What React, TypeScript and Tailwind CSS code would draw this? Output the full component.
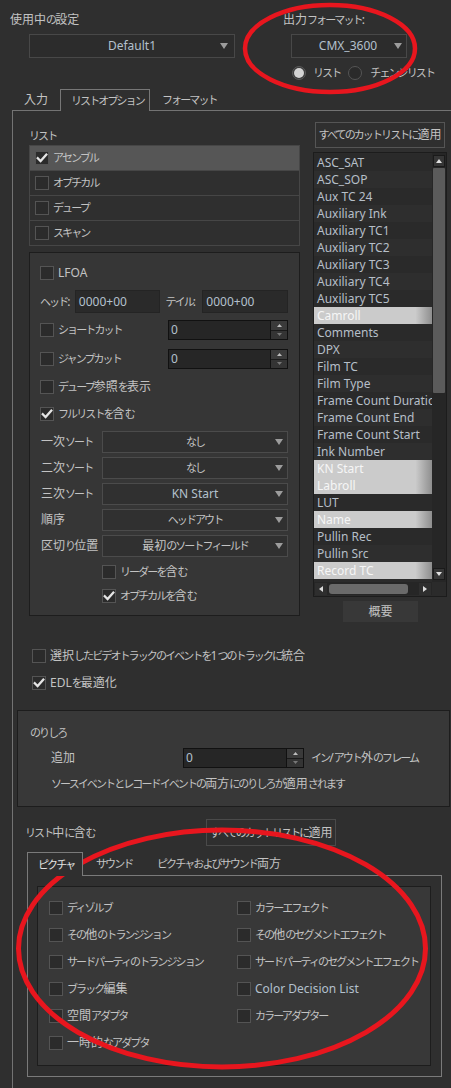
import React from "react";

const LBL = "text-[#c3c3c3]";
const VAL = "text-[#b3c0cd]";

const KANA = /([\u3040-\u30ff]+)/;
function J({ t }: { t: string }) {
  const parts = t.split(KANA);
  return (
    <>
      {parts.map((p, i) =>
        i % 2 === 1 ? (
          <span key={i} className="text-[11px] tracking-[-1.9px]">
            {p}
          </span>
        ) : p ? (
          <span key={i}>{p}</span>
        ) : null
      )}
    </>
  );
}

function Tri({ dir = "down", color = "#9c9c9c", w = 8, h = 6 }: { dir?: "down" | "up" | "left" | "right"; color?: string; w?: number; h?: number }) {
  let d = `M0 0 H${w} L${w / 2} ${h} Z`;
  if (dir === "up") d = `M0 ${h} H${w} L${w / 2} 0 Z`;
  if (dir === "left") d = `M${w} 0 V${h} L0 ${h / 2} Z`;
  if (dir === "right") d = `M0 0 V${h} L${w} ${h / 2} Z`;
  return (
    <svg width={w} height={h} viewBox={`0 0 ${w} ${h}`} className="block">
      <path d={d} fill={color} />
    </svg>
  );
}

function Checkbox({ checked }: { checked?: boolean }) {
  return (
    <span className="flex h-[14px] w-[14px] shrink-0 items-center justify-center border border-[#545454] bg-[#2b2b2b]">
      {checked && (
        <svg width="12" height="12" viewBox="0 0 12 12" className="block">
          <path d="M1.8 6.2 L4.6 9 L10.3 2.6" fill="none" stroke="#e4e4e4" strokeWidth="2.3" strokeLinecap="square" />
        </svg>
      )}
    </span>
  );
}

function CheckRow({ label, checked, className = "", latin }: { label: string; checked?: boolean; className?: string; latin?: boolean }) {
  return (
    <div className={`flex h-[18px] items-center gap-[4px] whitespace-nowrap ${className}`}>
      <Checkbox checked={checked} />
      {latin ? <span className={VAL}>{label}</span> : <span className={LBL}><J t={label} /></span>}
    </div>
  );
}

function Radio({ on }: { on?: boolean }) {
  return on ? (
    <span className="flex h-[14px] w-[14px] shrink-0 items-center justify-center rounded-full border border-[#5a5a5a] bg-[#3a3a3a]">
      <span className="block h-[10px] w-[10px] rounded-full bg-[#d4d4d4]" />
    </span>
  ) : (
    <span className="block h-[14px] w-[14px] shrink-0 rounded-full border border-[#555] bg-[#2a2a2a]" />
  );
}

function Select({ value, className = "", blue }: { value: string; className?: string; blue?: boolean }) {
  return (
    <div className={`flex h-[22px] items-center border border-[#4b4b4b] bg-[#303030] ${className}`}>
      <span className="w-[12px] shrink-0" />
      <span className={`flex-1 truncate text-center ${blue ? VAL : LBL}`}>{blue ? value : <J t={value} />}</span>
      <span className="flex w-[12px] shrink-0 items-center justify-start">
        <Tri />
      </span>
    </div>
  );
}

function Spin({ className = "" }: { className?: string }) {
  return (
    <div className={`flex h-[20px] shrink-0 border border-[#111] bg-[#262626] ${className}`}>
      <div className={`flex flex-1 items-center pl-[2px] ${VAL}`}>0</div>
      <div className="flex w-[17px] flex-col border-l border-[#111]">
        <div className="flex flex-1 items-center justify-center border-b border-[#1a1a1a] bg-[#3a3a3a]">
          <Tri dir="up" w={5} h={3} color="#bdbdbd" />
        </div>
        <div className="flex flex-1 items-center justify-center bg-[#343434]">
          <Tri dir="down" w={5} h={3} color="#777" />
        </div>
      </div>
    </div>
  );
}

const ITEMS: { t: string; s?: boolean }[] = [
  { t: "ASC_SAT" },
  { t: "ASC_SOP" },
  { t: "Aux TC 24" },
  { t: "Auxiliary Ink" },
  { t: "Auxiliary TC1" },
  { t: "Auxiliary TC2" },
  { t: "Auxiliary TC3" },
  { t: "Auxiliary TC4" },
  { t: "Auxiliary TC5" },
  { t: "Camroll", s: true },
  { t: "Comments" },
  { t: "DPX" },
  { t: "Film TC" },
  { t: "Film Type" },
  { t: "Frame Count Duration" },
  { t: "Frame Count End" },
  { t: "Frame Count Start" },
  { t: "Ink Number" },
  { t: "KN Start", s: true },
  { t: "Labroll", s: true },
  { t: "LUT" },
  { t: "Name", s: true },
  { t: "Pullin Rec" },
  { t: "Pullin Src" },
  { t: "Record TC", s: true },
];

const SORTS: { label: string; value: string; blue?: boolean }[] = [
  { label: "一次ソート", value: "なし" },
  { label: "二次ソート", value: "なし" },
  { label: "三次ソート", value: "KN Start", blue: true },
  { label: "順序", value: "ヘッドアウト" },
  { label: "区切り位置", value: "最初のソートフィールド" },
];

const PIC_LEFT = ["ディゾルブ", "その他のトランジション", "サードパーティのトランジション", "ブラック編集", "空間アダプタ", "一時的なアダプタ"];
const PIC_RIGHT = ["カラーエフェクト", "その他のセグメントエフェクト", "サードパーティのセグメントエフェクト", "Color Decision List", "カラーアダプター"];

export default function App() {
  return (
    <div className='relative flex h-[1088px] w-[451px] flex-col overflow-hidden bg-[#2f2f2f] font-["Noto_Sans","Noto_Sans_CJK_JP",sans-serif] text-[12px] leading-[16px] text-[#c3c3c3]'>
      {/* Header */}
      <div className="flex h-[89px] shrink-0 pt-[12px]">
        <div className="w-[283px] pl-[10px]">
          <div className="h-[16px]">
            <J t="使用中の設定" />
          </div>
          <div className="ml-[19px] mt-[6px] flex h-[24px] w-[206px] items-center border border-[#484848] bg-[#2c2c2c]">
            <span className="w-[14px]" />
            <span className={`flex-1 text-center ${VAL}`}>Default1</span>
            <span className="flex w-[14px] items-center justify-start">
              <Tri />
            </span>
          </div>
        </div>
        <div>
          <div className="h-[16px] whitespace-nowrap">
            <J t="出力フォーマット:" />
          </div>
          <div className="ml-[8px] mt-[6px] flex h-[24px] w-[116px] items-center border border-[#484848] bg-[#2c2c2c]">
            <span className="w-[10px]" />
            <span className={`flex-1 text-center ${VAL}`}>CMX_3600</span>
            <span className="flex w-[12px] items-center justify-start">
              <Tri />
            </span>
          </div>
          <div className="ml-[9px] mt-[6px] flex h-[18px] items-center whitespace-nowrap">
            <Radio on />
            <span className="ml-[7px]">
              <J t="リスト" />
            </span>
            <span className="ml-[8px]">
              <Radio />
            </span>
            <span className="ml-[8px]">
              <J t="チェンジリスト" />
            </span>
          </div>
        </div>
      </div>

      {/* Tabs */}
      <div className="ml-[12px] flex h-[21px] shrink-0 items-stretch whitespace-nowrap">
        <div className="flex w-[48px] items-center pl-[12px]">
          <J t="入力" />
        </div>
        <div className="relative z-10 -mb-px flex h-[22px] w-[90px] items-center border-l border-r border-t border-[#777] bg-[#2f2f2f] pl-[10px]">
          <J t="リストオプション" />
        </div>
        <div className="flex items-center pl-[12px]">
          <J t="フォーマット" />
        </div>
      </div>

      {/* Tab frame */}
      <div className="ml-[12px] flex-1 border-l border-t border-[#737373]">
        <div className="flex">
          {/* Left column */}
          <div className="ml-[16px] w-[271px] shrink-0 pt-[17px]">
            <div className="h-[16px]">
              <J t="リスト" />
            </div>
            <div className="mt-[1px] border border-[#464646]">
              {[
                { t: "アセンブル", c: true },
                { t: "オプチカル" },
                { t: "デュープ" },
                { t: "スキャン" },
              ].map((r, i) => (
                <div
                  key={r.t}
                  className={`flex items-center gap-[4px] pl-[5px] ${i < 3 ? "h-[25px] border-b border-[#464646]" : "h-[24px]"} ${r.c ? "bg-[#565656]" : "bg-[#2f2f2f]"}`}
                >
                  <Checkbox checked={r.c} />
                  <span>
                    <J t={r.t} />
                  </span>
                </div>
              ))}
            </div>

            {/* Options box */}
            <div className="mt-[6px] h-[364px] border border-[#1d1d1d] bg-[#363636] pl-[10px] pr-[11px] pt-[11px]">
              <CheckRow label="LFOA" />
              <div className="mt-[8px] flex h-[23px] items-center whitespace-nowrap">
                <span className="w-[35px]">
                  <J t="ヘッド:" />
                </span>
                <div className={`flex h-[23px] w-[85px] items-center border border-[#242424] bg-[#2a2a2a] pl-[3px] ${VAL}`}>0000+00</div>
                <span className="ml-[6px] w-[37px]">
                  <J t="テイル:" />
                </span>
                <div className={`flex h-[23px] w-[86px] items-center border border-[#242424] bg-[#2a2a2a] pl-[3px] ${VAL}`}>0000+00</div>
              </div>
              <div className="mt-[7px] flex h-[20px] items-center">
                <CheckRow label="ショートカット" />
                <Spin className="ml-auto w-[120px]" />
              </div>
              <div className="mt-[9px] flex h-[20px] items-center">
                <CheckRow label="ジャンプカット" />
                <Spin className="ml-auto w-[120px]" />
              </div>
              <CheckRow className="mt-[9px]" label="デュープ参照を表示" />
              <CheckRow className="mt-[9px]" label="フルリストを含む" checked />
              <div className="mt-[8px] flex flex-col gap-[4px]">
                {SORTS.map((s) => (
                  <div key={s.label} className="flex h-[22px] items-center">
                    <span className="w-[62px] shrink-0 whitespace-nowrap pl-[1px]">
                      <J t={s.label} />
                    </span>
                    <Select value={s.value} className="flex-1" blue={s.blue} />
                  </div>
                ))}
              </div>
              <CheckRow className="ml-[62px] mt-[6px]" label="リーダーを含む" />
              <CheckRow className="ml-[62px] mt-[6px]" label="オプチカルを含む" checked />
            </div>
          </div>

          {/* Right column */}
          <div className="ml-[13px] w-[134px] shrink-0 pt-[11px]">
            <div className="ml-[2px] flex h-[26px] w-[130px] items-center justify-center overflow-hidden whitespace-nowrap border border-[#555] bg-[#2f2f2f]">
              <J t="すべてのカットリストに適用" />
            </div>
            <div className="mt-[4px] flex h-[445px] flex-col border border-[#1c1c1c] bg-[#2b2b2b]">
              <div className="flex h-[429px]">
                <div className="w-[118px] overflow-hidden pt-[1px]">
                  {ITEMS.map((it, i) => (
                    <div
                      key={it.t}
                      className={`flex h-[17px] items-center overflow-hidden whitespace-nowrap pl-[3px] ${
                        it.s
                          ? "bg-[linear-gradient(to_right,#cbcbcb_86%,#8e8e8e)] text-[#f6f6f6]"
                          : i % 2 === 0
                          ? "bg-[#2a2a2a] text-[#b6bfc8]"
                          : "bg-[#2e2e2e] text-[#b6bfc8]"
                      }`}
                    >
                      {it.t}
                    </div>
                  ))}
                </div>
                <div className="flex w-[14px] flex-col bg-[#262626] py-[2px] pl-[1px] pr-[1px]">
                  <div className="flex h-[12px] items-center justify-center border border-[#1a1a1a] bg-[#363636]">
                    <Tri dir="up" w={6} h={4} color="#e0e0e0" />
                  </div>
                  <div className="mt-[1px] h-[225px] rounded-[1px] bg-[#5b5b5b]" />
                  <div className="flex-1" />
                  <div className="flex h-[12px] items-center justify-center border border-[#1a1a1a] bg-[#363636]">
                    <Tri dir="down" w={6} h={4} color="#e0e0e0" />
                  </div>
                </div>
              </div>
              <div className="flex h-[13px]">
                <div className="flex w-[118px] items-center bg-[#262626] px-[1px]">
                  <div className="flex h-[12px] w-[12px] items-center justify-center bg-[#2e2e2e]">
                    <Tri dir="left" w={4} h={6} color="#dcdcdc" />
                  </div>
                  <div className="ml-[2px] h-[10px] w-[79px] rounded-[3px] bg-[#6a6a6a]" />
                  <div className="flex-1" />
                  <div className="flex h-[12px] w-[12px] items-center justify-center bg-[#2e2e2e]">
                    <Tri dir="right" w={4} h={6} color="#dcdcdc" />
                  </div>
                </div>
                <div className="flex-1 bg-[#2b2b2b]" />
              </div>
            </div>
            <div className="ml-[30px] mt-[4px] flex h-[21px] w-[75px] items-center justify-center bg-[#383838]">
              <J t="概要" />
            </div>
          </div>
        </div>

        {/* Below options */}
        <CheckRow className="ml-[19px] mt-[25px]" label="選択したビデオトラックのイベントを1つのトラックに統合" />
        <CheckRow className="ml-[19px] mt-[9px]" label="EDLを最適化" checked />

        {/* のりしろ */}
        <div className="ml-[4px] mt-[18px] h-[97px] w-[433px] whitespace-nowrap border border-[#1d1d1d] bg-[#383838] pt-[14px]">
          <div className="ml-[12px] h-[16px]">
            <J t="のりしろ" />
          </div>
          <div className="mt-[7px] flex h-[20px] items-center pl-[33px]">
            <span className="w-[132px] shrink-0">
              <J t="追加" />
            </span>
            <Spin className="w-[121px]" />
            <span className="ml-[7px]">
              <J t="イン/アウト外のフレーム" />
            </span>
          </div>
          <div className="ml-[33px] mt-[8px] h-[16px]">
            <J t="ソースイベントとレコードイベントの両方にのりしろが適用されます" />
          </div>
        </div>

        {/* リスト中に含む */}
        <div className="ml-[12px] mt-[12px] flex h-[27px] items-center whitespace-nowrap">
          <span className="w-[181px] shrink-0">
            <J t="リスト中に含む" />
          </span>
          <div className="flex h-[27px] w-[130px] items-center justify-center overflow-hidden border border-[#4a4a4a]">
            <J t="すべてのカットリストに適用" />
          </div>
        </div>

        {/* Sub tabs */}
        <div className="ml-[14px] mt-[6px] flex h-[23px] items-stretch whitespace-nowrap">
          <div className="relative z-10 -mb-px flex h-[24px] w-[56px] items-center border-l border-r border-t border-[#7a7a7a] bg-[#2f2f2f] pl-[10px] text-[#e2e2e2]">
            <J t="ピクチャ" />
          </div>
          <div className="flex w-[74px] items-center pl-[13px]">
            <J t="サウンド" />
          </div>
          <div className="flex items-center">
            <J t="ピクチャおよびサウンド両方" />
          </div>
        </div>
        <div className="ml-[14px] h-[202px] w-[415px] border border-[#7a7a7a] pl-[9px] pt-[10px]">
          <div className="h-[180px] w-[394px] overflow-hidden border border-[#1d1d1d] bg-[#383838] pl-[11px] pt-[12px]">
            <div className="flex">
              <div className="flex w-[188px] shrink-0 flex-col gap-[9px]">
                {PIC_LEFT.map((t) => (
                  <CheckRow key={t} label={t} />
                ))}
              </div>
              <div className="flex shrink-0 flex-col gap-[9px]">
                {PIC_RIGHT.map((t) => (
                  <CheckRow key={t} label={t} latin={t === "Color Decision List"} />
                ))}
              </div>
            </div>
          </div>
        </div>
      </div>

      {/* Red annotation ellipses */}
      <svg className="pointer-events-none absolute left-0 top-0" width="451" height="1088" viewBox="0 0 451 1088">
        <ellipse cx="330" cy="48.5" rx="85" ry="43.5" fill="none" stroke="#e8161e" strokeWidth="4.5" />
        <ellipse cx="222" cy="948.5" rx="203.5" ry="118.5" fill="none" stroke="#e8161e" strokeWidth="5" />
      </svg>
    </div>
  );
}
